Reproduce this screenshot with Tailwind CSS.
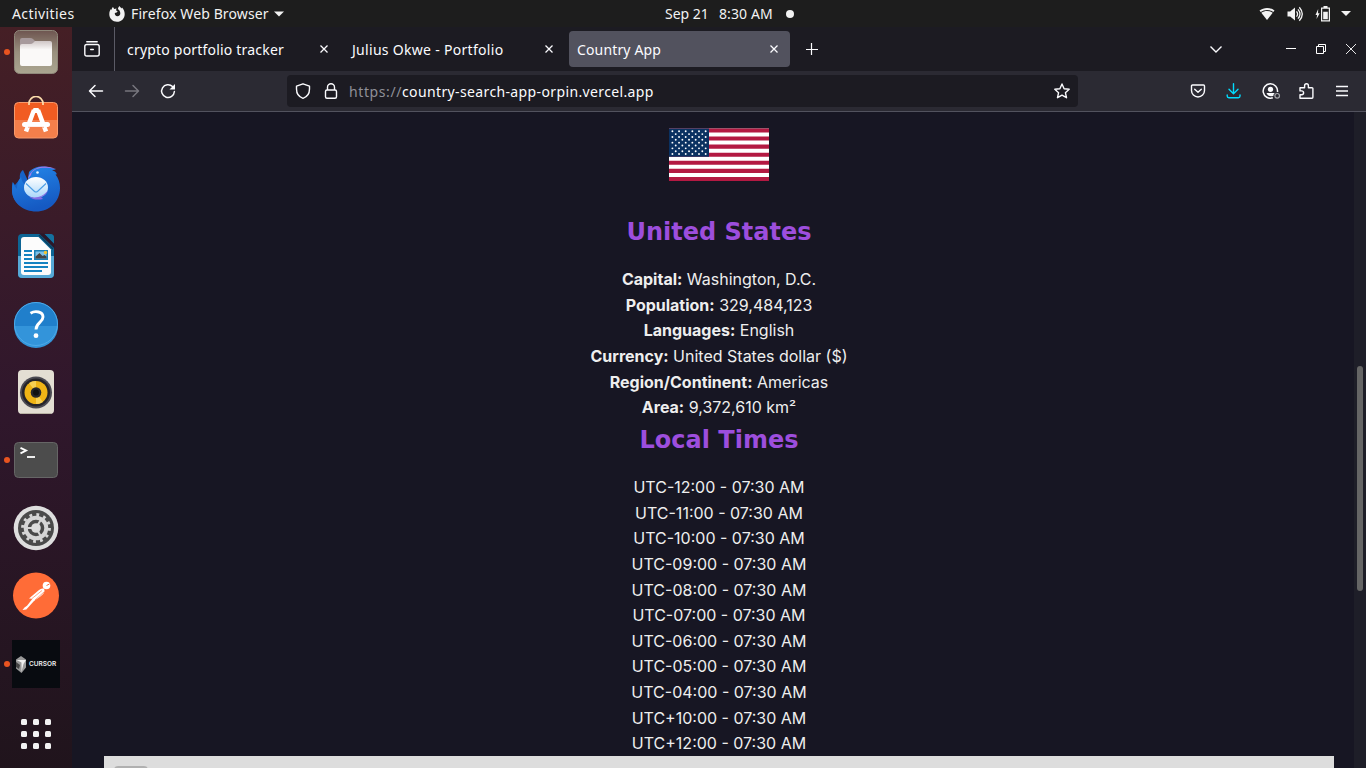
<!DOCTYPE html>
<html lang="en">
<head>
<meta charset="utf-8">
<title>Country App</title>
<script src="https://cdn.jsdelivr.net/npm/@tailwindcss/browser@4"></script>
</head>
<body class="w-[1366px] h-[768px] overflow-hidden bg-[#171623] text-[#fbfbfe] font-['Noto_Sans',sans-serif] text-[14px] flex flex-col whitespace-nowrap">

<!-- System bar -->
<header class="h-[27px] shrink-0 bg-[#1d1d1d] text-[#f2f2f2] text-[14px] flex items-center pl-3 pr-[15px]">
  <span class="w-[97px] tracking-[0.42px]">Activities</span>
  <svg class="w-4 h-4 mr-[6px]" viewBox="0 0 16 16"><path fill="#f2f2f2" fill-rule="evenodd" d="M4 1 5.200 3 7.500 2.600 7 4.200 8.700 5.600 7.600 6.600 5.800 7C5.600 8.900 6.800 10.200 8.400 10.200 10.300 10.200 11.500 8.800 11.300 6.900 11.200 5 10 3.600 8.900 2.900 9.400 1.400 9.900.800 10.700.100c.2 1.100 1.100 1.600 1.900 2.400l.4-1.100c1.500 1.500 2.700 3.800 2.700 6.500 0 4.500-3.400 7.900-7.700 7.900S.3 12.500.3 8.300c0-2.300.6-3.900 1.700-5.200l.3 1.200C2.700 2.700 3.300 1.500 4 1Z"/></svg>
  <span class="w-[138px] tracking-[0.12px]">Firefox Web Browser</span>
  <svg class="w-[10px] h-[6px] ml-[5px]" viewBox="0 0 10 6"><path fill="#f2f2f2" d="M0 .5h10L5 5.500z"/></svg>
  <span class="ml-[381px] w-[54px]">Sep 21</span>
  <span class="w-[54px] tracking-[0.1px]">8:30 AM</span>
  <span class="ml-[13px] size-2 rounded-full bg-[#f2f2f2]"></span>
  <div class="ml-auto flex items-center">
    <svg class="w-4 h-4" viewBox="0 0 16 16"><path fill="#f2f2f2" d="M.5 4.500C5 1 11 1 15.500 4.500L14.300 6C10.500 3.200 5.500 3.200 1.700 6z"/><path fill="#f2f2f2" d="M2.300 6.800C5.800 4.300 10.200 4.300 13.700 6.800L8 14z"/></svg>
    <svg class="w-4 h-4 ml-3" viewBox="0 0 16 16"><path fill="#f2f2f2" d="M.5 5.500h2.700L8 1.500v13l-4.800-4H.5z"/><path fill="none" stroke="#f2f2f2" stroke-width="1.300" d="M9.500 5.300q2.200 2.700 0 5.400M11 3.300q4 4.700 0 9.400M12.300 1.200q6 6.800 0 13.600"/></svg>
    <svg class="w-4 h-4 ml-3" viewBox="0 0 16 16"><path fill="#f2f2f2" d="M3.200 3 .5 9h1.600l-.6 4L4.700 7.200H3z"/><path fill="none" stroke="#f2f2f2" stroke-width="1.200" d="M6.600 2.100h7.800v12.800H6.600z"/><path fill="#f2f2f2" d="M8.500 0h4v2h-4zM8.200 5.800h4.600v7.500H8.200z"/></svg>
    <svg class="w-[10px] h-[5px] ml-[10px]" viewBox="0 0 10 5"><path fill="#f2f2f2" d="M0 0h10L5 5z"/></svg>
  </div>
</header>

<div class="flex flex-1 min-h-0">
<!-- Dock -->
<aside class="w-[72px] shrink-0 overflow-hidden bg-linear-to-b from-[#451f25] via-[#30172c] to-[#20141c] text-[#e95420]">
  <ul class="-mt-[9px] flex flex-col">
    <li class="h-[68px] flex items-center"><i class="size-[6px] ml-1 mr-[2px] rounded-full bg-[#e95420]"></i>
      <svg class="size-12" viewBox="0 0 48 48"><defs><linearGradient id="fa" x2="0" y2="1"><stop stop-color="#6e5550"/><stop offset=".5" stop-color="#99907e"/><stop offset="1" stop-color="#aaa590"/></linearGradient><linearGradient id="fb" x2="0" y2="1"><stop stop-color="#cfc6c6"/><stop offset=".35" stop-color="#faf9f8"/></linearGradient></defs><rect x="2.500" y="2.500" width="43" height="43" rx="5" fill="url(#fa)" stroke="#8f887a"/><path fill="#a79a9c" d="M8 14v-2q0-2 2-2h8q2 0 3 1l3 3h14q2 0 2 2v6H8z"/><path fill="url(#fb)" d="M8 18q0-2 2-2h8q2 0 3-1l2-2h15q2 0 2 2v21q0 2-2 2H10q-2 0-2-2z"/></svg></li>
    <li class="h-[68px] flex items-center justify-center">
      <svg class="size-12" viewBox="0 0 48 48"><rect x="2.500" y="6.500" width="43" height="35.500" rx="4" fill="#f15c22"/><path d="M3 24h42v14q0 4-4 4H7q-4 0-4-4z" fill="#f37f4b"/><rect x="2.500" y="6.500" width="43" height="35.500" rx="4" fill="none" stroke="#f79a6c"/><path d="M17 9V7.500a7 7 0 0 1 14 0V9" fill="none" stroke="#fbdcab" stroke-width="1.700"/><g stroke="#fff" fill="none" stroke-linecap="round"><path d="M22 14 14 35.500M26 14l8 21.500" stroke-width="4.500" stroke-linecap="butt"/><path d="M21.500 12h5l1.500 5h-8z" fill="#fff" stroke="none"/><path d="M12.500 28.500h23" stroke-width="5"/></g><path d="M16 31.300h16" stroke="#f37f4b" stroke-width=".6"/></svg></li>
    <li class="h-[68px] flex items-center justify-center">
      <svg class="size-12 mt-[2px] overflow-visible" viewBox="0 0 48 48"><defs><linearGradient id="ta" x2=".3" y2="1"><stop stop-color="#2488ea"/><stop offset="1" stop-color="#1559c2"/></linearGradient><linearGradient id="tb" x2="0" y2="1"><stop stop-color="#fff"/><stop offset="1" stop-color="#a9d6fa"/></linearGradient></defs><path fill="#1763c8" d="M11 5c-3 2-3.500 5-3 9l-5 6-2.500-3C-.7 25-.5 34 7 40l10-4V18z"/><path fill="url(#ta)" d="M17 7C22 1 33-.5 44 4.500l-4 .8c3 .7 4 2 5 4l-1.500.2C46.500 13 48 18 48 23c0 13-10 23.500-24 23.500C12 46.500 0 38 0 25c0-4 1-6 1-8 .5 3 2 5 4 7 0-5 1-9 4-12 1 5 3 8 7 9V13z"/><path fill="#a67bea" d="M16 14C18 3 31-2 44 4 31 1.500 23 3 19.500 8l-.5 2-3 4z"/><circle cx="25.500" cy="7.500" r="1.300" fill="#e9f4ff"/><ellipse cx="24" cy="22.500" rx="12" ry="10.500" fill="url(#tb)"/><path d="M14 18.500l8.500 8q1.500 1 3 0l8.500-8" fill="none" stroke="#4b9de4" stroke-width="1.100"/><path fill="#876de4" d="M17 31.500c7 2.500 14 0 19-6-1 3.500-4 5.500-7 6.500l2 2c-5 1-10 1-14-2.500z"/></svg></li>
    <li class="h-[68px] flex items-center justify-center">
      <svg class="size-12" viewBox="0 0 48 48"><rect x="6" y="2" width="36" height="44" rx="4" fill="#0d6595"/><path d="M6 24h36v18q0 4-4 4H10q-4 0-4-4z" fill="#56a9d6"/><path fill="#fcfcfc" d="M9 8q0-3 3-3h14.500L39 17.500V40q0 3-3 3H12q-3 0-3-3z"/><path fill="#2b1728" d="M27 1.500h5L42.500 12v4.500z"/><path fill="#15719f" d="M33 2h5q4 0 4 4v5.500z"/><path d="M27 3l14 14" stroke="#093e5c" stroke-width="1.500"/><path stroke="#1583c1" stroke-width="2" d="M12 19h8M12 23h8M12 27h8M12 31h24M12 35h24M12 39h18"/><path fill="#187fb5" d="M22 18h14v10H22z"/><path fill="#7cc1e8" d="M23.500 19.500h11v7h-11z"/><path fill="#454545" d="M23.500 26.500v-2l4-3.500 3 3 2-1 2 1.500v2z"/><circle cx="33.500" cy="20.500" r="1.700" fill="#f5c52d"/></svg></li>
    <li class="h-[68px] flex items-center justify-center">
      <svg class="size-12" viewBox="0 0 48 48"><circle cx="24" cy="24" r="22" fill="#207fcb"/><path d="M2 26h44a22 22 0 0 1-44 0z" fill="#3394da"/><circle cx="24" cy="24" r="21.500" fill="none" stroke="#4eaae8"/><path d="M18.500 13.200c5-3 12.500-1.500 12.500 3.800 0 5.500-7 5.500-7 12.500" fill="none" stroke="#fff" stroke-width="2.900"/><circle cx="24" cy="35.700" r="2.400" fill="#fff"/></svg></li>
    <li class="h-[68px] flex items-center justify-center">
      <svg class="size-12" viewBox="0 0 48 48"><rect x="6" y="2" width="36" height="44" rx="4" fill="#e3ded3"/><path d="M9 45.500h30" stroke="#b9b3a4"/><circle cx="24" cy="24.500" r="16" fill="#4b4a52"/><circle cx="24" cy="24.500" r="14" fill="#25242a"/><circle cx="24" cy="24.500" r="11.500" fill="#efb416"/><path d="M24 24.500 17 15a11.500 11.500 0 0 1 7-2zM24 24.500l7 9.500a11.500 11.500 0 0 1-7 2z" fill="#f8d052"/><circle cx="24" cy="24.500" r="5.300" fill="#26262a"/><circle cx="24" cy="24.500" r="3" fill="#111"/></svg></li>
    <li class="h-[68px] flex items-center"><i class="size-[6px] ml-1 mr-[2px] rounded-full bg-[#e95420]"></i>
      <svg class="size-12" viewBox="0 0 48 48"><rect x="2.500" y="6.500" width="43" height="35" rx="4" fill="#4c4c4c" stroke="#666"/><path d="M8.500 11.800 14 14.500l-5.500 2.800" fill="none" stroke="#fff" stroke-width="1.900"/><path d="M15 21h8" stroke="#fff" stroke-width="1.800"/></svg></li>
    <li class="h-[68px] flex items-center justify-center">
      <svg class="size-12" viewBox="0 0 48 48"><circle cx="24" cy="24" r="22.300" fill="#dedede"/><circle cx="24" cy="24" r="18" fill="#4a4a4a"/><g fill="none" stroke="#d6d6d6"><circle cx="24" cy="24" r="13.400" stroke-width="3" stroke-dasharray="2.800 4.216"/><circle cx="24" cy="24" r="10.300" stroke-width="4"/><path d="M24 24h-9M24 24l5-8.500M24 24l5 8.500" stroke-width="2"/></g><circle cx="24" cy="24" r="4.800" fill="#dcdcdc"/></svg></li>
    <li class="h-[68px] flex items-center justify-center">
      <svg class="size-12" viewBox="0 0 48 48"><circle cx="24" cy="23.500" r="23" fill="#ff6c37"/><circle cx="34.500" cy="13.500" r="3.800" fill="#fff"/><path d="M34.500 13.500l3-1.500" stroke="#ff6c37"/><path d="M31.800 16.500c-2.500-.3-4 .5-6 2.500L17 26.500l3.500.3-5.500 7-2.500 1.700-2 2.500 3.800-.6 7.700-8.400 7-5c3-2.500 4.500-5 2.800-7.500z" fill="#fff"/><path d="M30 18.500l-10 8M32 20l-9 8" stroke="#ff6c37" stroke-width=".6"/></svg></li>
    <li class="h-[68px] flex items-center"><i class="size-[6px] ml-1 mr-[2px] rounded-full bg-[#e95420]"></i>
      <div class="size-12 bg-[#080b10] flex items-center pl-1">
        <svg class="w-[11px] h-[18px]" viewBox="0 0 11 18"><path fill="#999" d="M0 4.500 5 1l5 3.500v8L5.500 18 0 13.500z"/><path fill="#eee" d="m.5 5 5 2.500V17l2-8 2.500-4z"/><path fill="#444" d="m0 7 4 3-1 4-3-2z"/></svg>
        <span class="ml-[2px] font-[Inter,sans-serif] font-semibold text-[6.5px] leading-[10px] text-[#eee]">CURSOR</span>
      </div></li>
    <li class="h-[72px] flex items-center justify-center">
      <div class="grid grid-cols-3 gap-[6px]"><i class="size-[6px] rounded-[1.500px] bg-[#f2f2f2]"></i><i class="size-[6px] rounded-[1.500px] bg-[#f2f2f2]"></i><i class="size-[6px] rounded-[1.500px] bg-[#f2f2f2]"></i><i class="size-[6px] rounded-[1.500px] bg-[#f2f2f2]"></i><i class="size-[6px] rounded-[1.500px] bg-[#f2f2f2]"></i><i class="size-[6px] rounded-[1.500px] bg-[#f2f2f2]"></i><i class="size-[6px] rounded-[1.500px] bg-[#f2f2f2]"></i><i class="size-[6px] rounded-[1.500px] bg-[#f2f2f2]"></i><i class="size-[6px] rounded-[1.500px] bg-[#f2f2f2]"></i></div></li>
  </ul>
</aside>

<!-- Browser window -->
<div class="flex-1 min-w-0 flex flex-col">
  <div class="h-[44px] shrink-0 bg-[#1c1b22] flex items-center">
    <div class="w-[43px] h-full border-r border-[#5b5b66] flex items-center pl-3">
      <svg class="size-4" viewBox="0 0 16 16" fill="none" stroke="#fbfbfe" stroke-width="1.400" stroke-linecap="round"><path d="M2.800.8h10.400"/><path d="M2.800 3.500h10.400q2 0 2 2V13q0 2-2 2H2.800q-2 0-2-2V5.500q0-2 2-2z"/><path d="M6.700 8.500h2.600"/></svg>
    </div>
    <div class="w-[225px] flex items-center justify-between pl-3 pr-[12px]"><span class="tracking-[0.2px]">crypto portfolio tracker</span>
      <svg class="size-2" viewBox="0 0 8 8"><path d="M.5.5l7 7m0-7-7 7" stroke="#fbfbfe" stroke-width="1.300"/></svg></div>
    <div class="w-[225px] flex items-center justify-between pl-3 pr-[12px]"><span class="tracking-[0.3px]">Julius Okwe - Portfolio</span>
      <svg class="size-2" viewBox="0 0 8 8"><path d="M.5.5l7 7m0-7-7 7" stroke="#fbfbfe" stroke-width="1.300"/></svg></div>
    <div class="ml-1 w-[221px] h-[36px] rounded bg-[#52525e] flex items-center justify-between pl-2 pr-[12px]"><span class="tracking-[0.15px]">Country App</span>
      <svg class="size-2" viewBox="0 0 8 8"><path d="M.5.5l7 7m0-7-7 7" stroke="#fbfbfe" stroke-width="1.300"/></svg></div>
    <svg class="size-3 ml-4" viewBox="0 0 12 12"><path d="M5.500 0v12M0 6.500h12" stroke="#fbfbfe" stroke-width="1.200"/></svg>
    <div class="ml-auto flex items-center pr-[10px]">
      <svg class="w-3 h-[7px]" viewBox="0 0 12 7"><path d="M.5.5 6 6 11.500.5" fill="none" stroke="#fbfbfe" stroke-width="1.400"/></svg>
      <svg class="w-[10px] h-[10px] ml-16" viewBox="0 0 10 10"><path d="M0 4.500h10" stroke="#fff"/></svg>
      <svg class="w-[10px] h-[10px] ml-5" viewBox="0 0 10 10" fill="none" stroke="#fff"><path d="M.5 2.500h7v7h-7zM2.500 2.500v-2h7v7h-2"/></svg>
      <svg class="w-[10px] h-[10px] ml-5" viewBox="0 0 10 10"><path d="M0 0l10 10m0-10-10 10" stroke="#fff" stroke-width=".9"/></svg>
    </div>
  </div>

  <div class="h-[41px] shrink-0 bg-[#2b2a33] border-b border-[#52525e] flex items-center pl-4 pr-4">
    <svg class="size-4" viewBox="0 0 16 16" fill="none" stroke="#fbfbfe" stroke-width="1.500" stroke-linecap="round" stroke-linejoin="round"><path d="M14.500 8H1.700M7 2.500 1.500 8 7 13.500"/></svg>
    <svg class="size-4 ml-5" viewBox="0 0 16 16" fill="none" stroke="#77767e" stroke-width="1.500" stroke-linecap="round" stroke-linejoin="round"><path d="M1.500 8h12.800M9 2.500l5.500 5.500L9 13.500"/></svg>
    <svg class="size-4 ml-5" viewBox="0 0 16 16"><path d="M12.500 3.500A6.400 6.400 0 1 0 14.400 8.500" fill="none" stroke="#fbfbfe" stroke-width="1.500" stroke-linecap="round"/><path d="M15 1v5.500H9.500z" fill="#fbfbfe"/></svg>
    <div class="ml-[111px] w-[791px] h-8 rounded bg-[#1c1b22] flex items-center pl-2 pr-2">
      <svg class="size-4" viewBox="0 0 16 16"><path d="M8 .8 14.500 3.200V6c0 4.500-2.500 8-6.500 9.300C4 14 1.500 10.500 1.500 6V3.200z" fill="none" stroke="#fbfbfe" stroke-width="1.400" stroke-linejoin="round"/></svg>
      <svg class="size-4 ml-3" viewBox="0 0 16 16" fill="none" stroke="#fbfbfe" stroke-width="1.400"><rect x="2.500" y="7" width="11" height="8.200" rx="1.500"/><path d="M4.500 7V4.300a3.500 3.500 0 0 1 7 0V7"/></svg>
      <span class="ml-[10px] w-[53px] text-[#8f8f97] tracking-[0.6px]">https://</span><span class="tracking-[0.37px]">country-search-app-orpin.vercel.app</span>
      <svg class="size-4 ml-auto" viewBox="0 0 16 16"><path d="M8 1l2.100 4.700 5.100.5-3.800 3.500 1.100 5L8 12.200l-4.500 2.500 1.100-5L.8 6.200l5.100-.5z" fill="none" stroke="#fbfbfe" stroke-width="1.400" stroke-linejoin="round"/></svg>
    </div>
    <div class="ml-auto flex items-center">
      <svg class="size-4" viewBox="0 0 16 16" fill="none" stroke="#fbfbfe" stroke-width="1.400" stroke-linecap="round" stroke-linejoin="round"><path d="M2.500 2h11q1 0 1 1v4.500a6.500 6.500 0 0 1-13 0V3q0-1 1-1z"/><path d="M4.700 6.200 8 9.300l3.300-3.100"/></svg>
      <svg class="size-4 ml-5" viewBox="0 0 16 16" fill="none" stroke="#00ddff" stroke-width="1.400" stroke-linecap="round" stroke-linejoin="round"><path d="M7.500.8v9.700M3 6.300l4.500 4.500L12 6.300M1.200 12v1q0 1.700 1.700 1.700h9.400q1.700 0 1.700-1.700v-1"/></svg>
      <svg class="w-[19px] h-4 ml-5" viewBox="0 0 19 16"><path d="M10.800 14.800A7.200 7.200 0 1 1 15.500 9" fill="none" stroke="#fbfbfe" stroke-width="1.500"/><circle cx="8.500" cy="6.300" r="2.600" fill="#fbfbfe"/><path fill="#fbfbfe" d="M4.500 10h8.300q-1.500 1-1.500 3l-2 .300q-3.500 0-4.800-3.300z"/><circle cx="15.200" cy="12.800" r="2.300" fill="none" stroke="#a5a5ab" stroke-width="1.200"/></svg>
      <svg class="size-4 ml-[17px]" viewBox="0 0 16 16"><path d="M2 15.200V11.700H3.700a1.900 1.900 0 0 0 0-3.800H2V4.700H6.600V2.700a1.900 1.900 0 0 1 3.800 0V4.700h3.600q.9 0 .9.900V14.300q0 .900-.9.900z" fill="none" stroke="#fbfbfe" stroke-width="1.400" stroke-linejoin="round"/></svg>
      <svg class="w-3 h-4 ml-[22px] mr-[2px]" viewBox="0 0 12 16"><path d="M0 3.500h12M0 8h12M0 12.500h12" stroke="#fbfbfe" stroke-width="1.400"/></svg>
    </div>
  </div>

  <!-- Page -->
  <div class="flex-1 min-h-0 relative overflow-hidden bg-[#171623] font-[Inter,sans-serif] text-[16px] leading-[25.6px] text-center">
    <main class="flex flex-col items-center pt-[16.400px] font-normal text-[#eeeeee]">
      <svg class="w-[100px] h-[52.600px]" viewBox="0 -0.4 100 52.6" id="flag"><path fill="#fff" d="M0 0h100v52.600H0z"/><path stroke="#b31942" stroke-width="4.046" d="M0 2.023h100m-100 8.092h100m-100 8.092h100m-100 8.092h100m-100 8.092h100m-100 8.092h100m-100 8.092h100"/><path fill="#0a3161" d="M0 0h40v28.300H0z"/></svg>
      <h2 class="mt-[31.800px] mb-4 font-['DejaVu_Sans'] font-bold text-[24px] leading-[38.400px] text-[#9d4edd]">United States</h2>
      <p><b class="font-bold">Capital:</b> Washington, D.C.</p>
      <p><b class="font-bold">Population:</b> 329,484,123</p>
      <p><b class="font-bold">Languages:</b> English</p>
      <p><b class="font-bold">Currency:</b> United States dollar ($)</p>
      <p><b class="font-bold">Region/Continent:</b> Americas</p>
      <p><b class="font-bold">Area:</b> 9,372,610 km²</p>
      <h2 class="mb-4 font-['DejaVu_Sans'] font-bold text-[24px] leading-[38.400px] text-[#9d4edd]">Local Times</h2>
      <p>UTC-12:00 - 07:30 AM</p>
      <p>UTC-11:00 - 07:30 AM</p>
      <p>UTC-10:00 - 07:30 AM</p>
      <p>UTC-09:00 - 07:30 AM</p>
      <p>UTC-08:00 - 07:30 AM</p>
      <p>UTC-07:00 - 07:30 AM</p>
      <p>UTC-06:00 - 07:30 AM</p>
      <p>UTC-05:00 - 07:30 AM</p>
      <p>UTC-04:00 - 07:30 AM</p>
      <p>UTC+10:00 - 07:30 AM</p>
      <p>UTC+12:00 - 07:30 AM</p>
      <section class="-mt-[0.800px] w-[1230px] h-10 bg-[#ddd] pt-[10px] pl-[10px]"><div class="w-[34px] h-[34px] rounded bg-[#b0b0b0]"></div></section>
    </main>
    <div class="absolute right-0 top-0 h-full w-3 bg-[#1e1e28]"><div class="mt-[254px] ml-[3px] w-[6px] h-[225px] rounded-full bg-[#656565]"></div></div>
  </div>
</div>
</div>
<script>
const flag = document.getElementById('flag');
for (let r = 0; r < 9; r++) for (let c = 0; c < (r % 2 ? 5 : 6); c++) {
  const s = document.createElementNS('http://www.w3.org/2000/svg', 'circle');
  s.setAttribute('cx', 3.4 + c * 6.65 + (r % 2 ? 3.32 : 0));
  s.setAttribute('cy', 2.85 + r * 2.85);
  s.setAttribute('r', 0.95);
  s.setAttribute('fill', '#fff');
  flag.append(s);
}
</script>
</body>
</html>
